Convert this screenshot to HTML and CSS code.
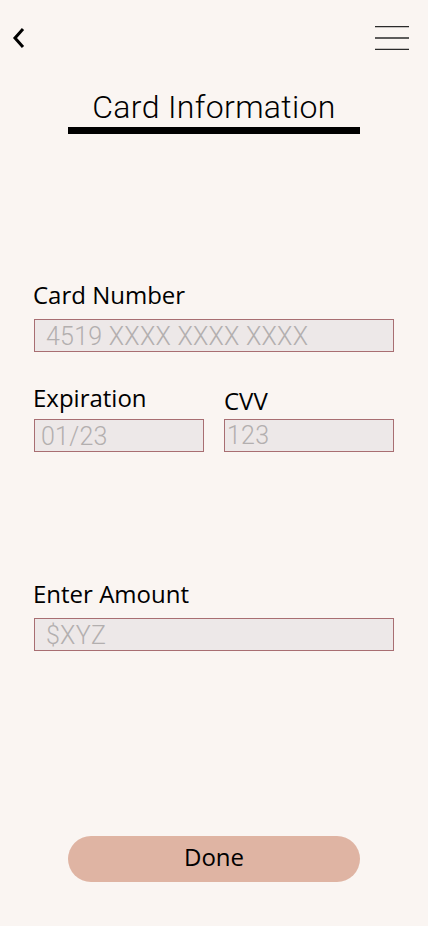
FILE: index.html
```html
<!DOCTYPE html>
<html lang="en">
<head>
<meta charset="utf-8">
<title>Card Information</title>
<link rel="stylesheet" href="styles.css">
</head>
<body>
<div class="page">
  <header class="topbar">
    <button class="icon-btn back" aria-label="Back">
      <svg width="14" height="22" viewBox="0 0 14 22"><path d="M11 2 L3 11 L11 20" fill="none" stroke="#000" stroke-width="3" stroke-linejoin="miter"/></svg>
    </button>
    <button class="icon-btn menu" aria-label="Menu">
      <svg width="34" height="24" viewBox="0 0 34 24"><path d="M0 0.5 H34 M0 12 H34 M0 23.5 H34" stroke="#2a2a2a" stroke-width="1.3"/></svg>
    </button>
  </header>

  <h1 class="title">Card Information</h1>

  <form class="form">
    <div class="field">
      <label class="label" for="num">Card Number</label>
      <input class="input pad-wide" id="num" type="text" placeholder="4519 XXXX XXXX XXXX">
    </div>

    <div class="row">
      <div class="field">
        <label class="label" for="exp">Expiration</label>
        <input class="input pad-mid" id="exp" type="text" placeholder="01/23">
      </div>
      <div class="field cvv">
        <label class="label" for="cvv">CVV</label>
        <input class="input pad-narrow" id="cvv" type="text" placeholder="123">
      </div>
    </div>

    <div class="field amount">
      <label class="label" for="amt">Enter Amount</label>
      <input class="input pad-wide" id="amt" type="text" placeholder="$XYZ">
    </div>
  </form>

  <button class="done" type="button">Done</button>
</div>
</body>
</html>
```

FILE: styles.css
```css
* { box-sizing: border-box; }

html, body {
  margin: 0;
  padding: 0;
  background: #faf5f2;
}

.page {
  min-height: 926px;
  display: flex;
  flex-direction: column;
  padding-bottom: 44px;
}

.topbar {
  display: flex;
  justify-content: space-between;
  align-items: flex-start;
  padding: 26px 19px 0 12px;
  height: 50px;
}

.icon-btn {
  background: none;
  border: 0;
  padding: 0;
  margin: 0;
  display: block;
  line-height: 0;
}

.back { margin-top: 1px; }

.title {
  margin: 37px auto 0;
  width: 292px;
  font-family: Roboto, "Noto Sans", sans-serif;
  font-weight: 300;
  font-size: 32px;
  line-height: 40px;
  letter-spacing: 0.35px;
  text-align: center;
  color: #000;
  border-bottom: 7px solid #000;
}

.form {
  padding: 0 34px;
  margin-top: 145px;
  display: flex;
  flex-direction: column;
}

.field {
  display: flex;
  flex-direction: column;
}

.label {
  font-family: "Open Sans", "Noto Sans", sans-serif;
  font-size: 24px;
  line-height: 32px;
  color: #000;
  margin-left: -1px;
  margin-bottom: 8px;
}

.input {
  -webkit-appearance: none;
  appearance: none;
  height: 33px;
  border: 1px solid #a86e72;
  background: #ede8e8;
  box-shadow: none;
  font-family: Roboto, sans-serif;
  font-weight: 300;
  font-size: 25px;
  letter-spacing: 0.25px;
  color: #333;
  outline: none;
  border-radius: 0;
  width: 100%;
  margin: 0;
}

.input::placeholder {
  color: #b3afaf;
  opacity: 1;
}

.pad-wide { padding: 2px 0 0 11px; }
.pad-mid { padding: 2px 0 0 6px; }
.pad-narrow { padding: 0 0 0 2px; }

.row {
  display: grid;
  grid-template-columns: 170px 170px;
  column-gap: 20px;
  margin-top: 30px;
}

.row .label { margin-bottom: 5px; }
.row .cvv .label { padding-top: 3px; margin-bottom: 2px; margin-left: 0; }

.amount { margin-top: 126px; }

.done {
  margin: auto auto 0;
  width: 292px;
  height: 46px;
  border: 0;
  border-radius: 23px;
  background: #dfb4a3;
  font-family: "Open Sans", "Noto Sans", sans-serif;
  font-size: 24px;
  line-height: 32px;
  color: #000;
  padding: 5px 0 9px;
  cursor: pointer;
}
```
